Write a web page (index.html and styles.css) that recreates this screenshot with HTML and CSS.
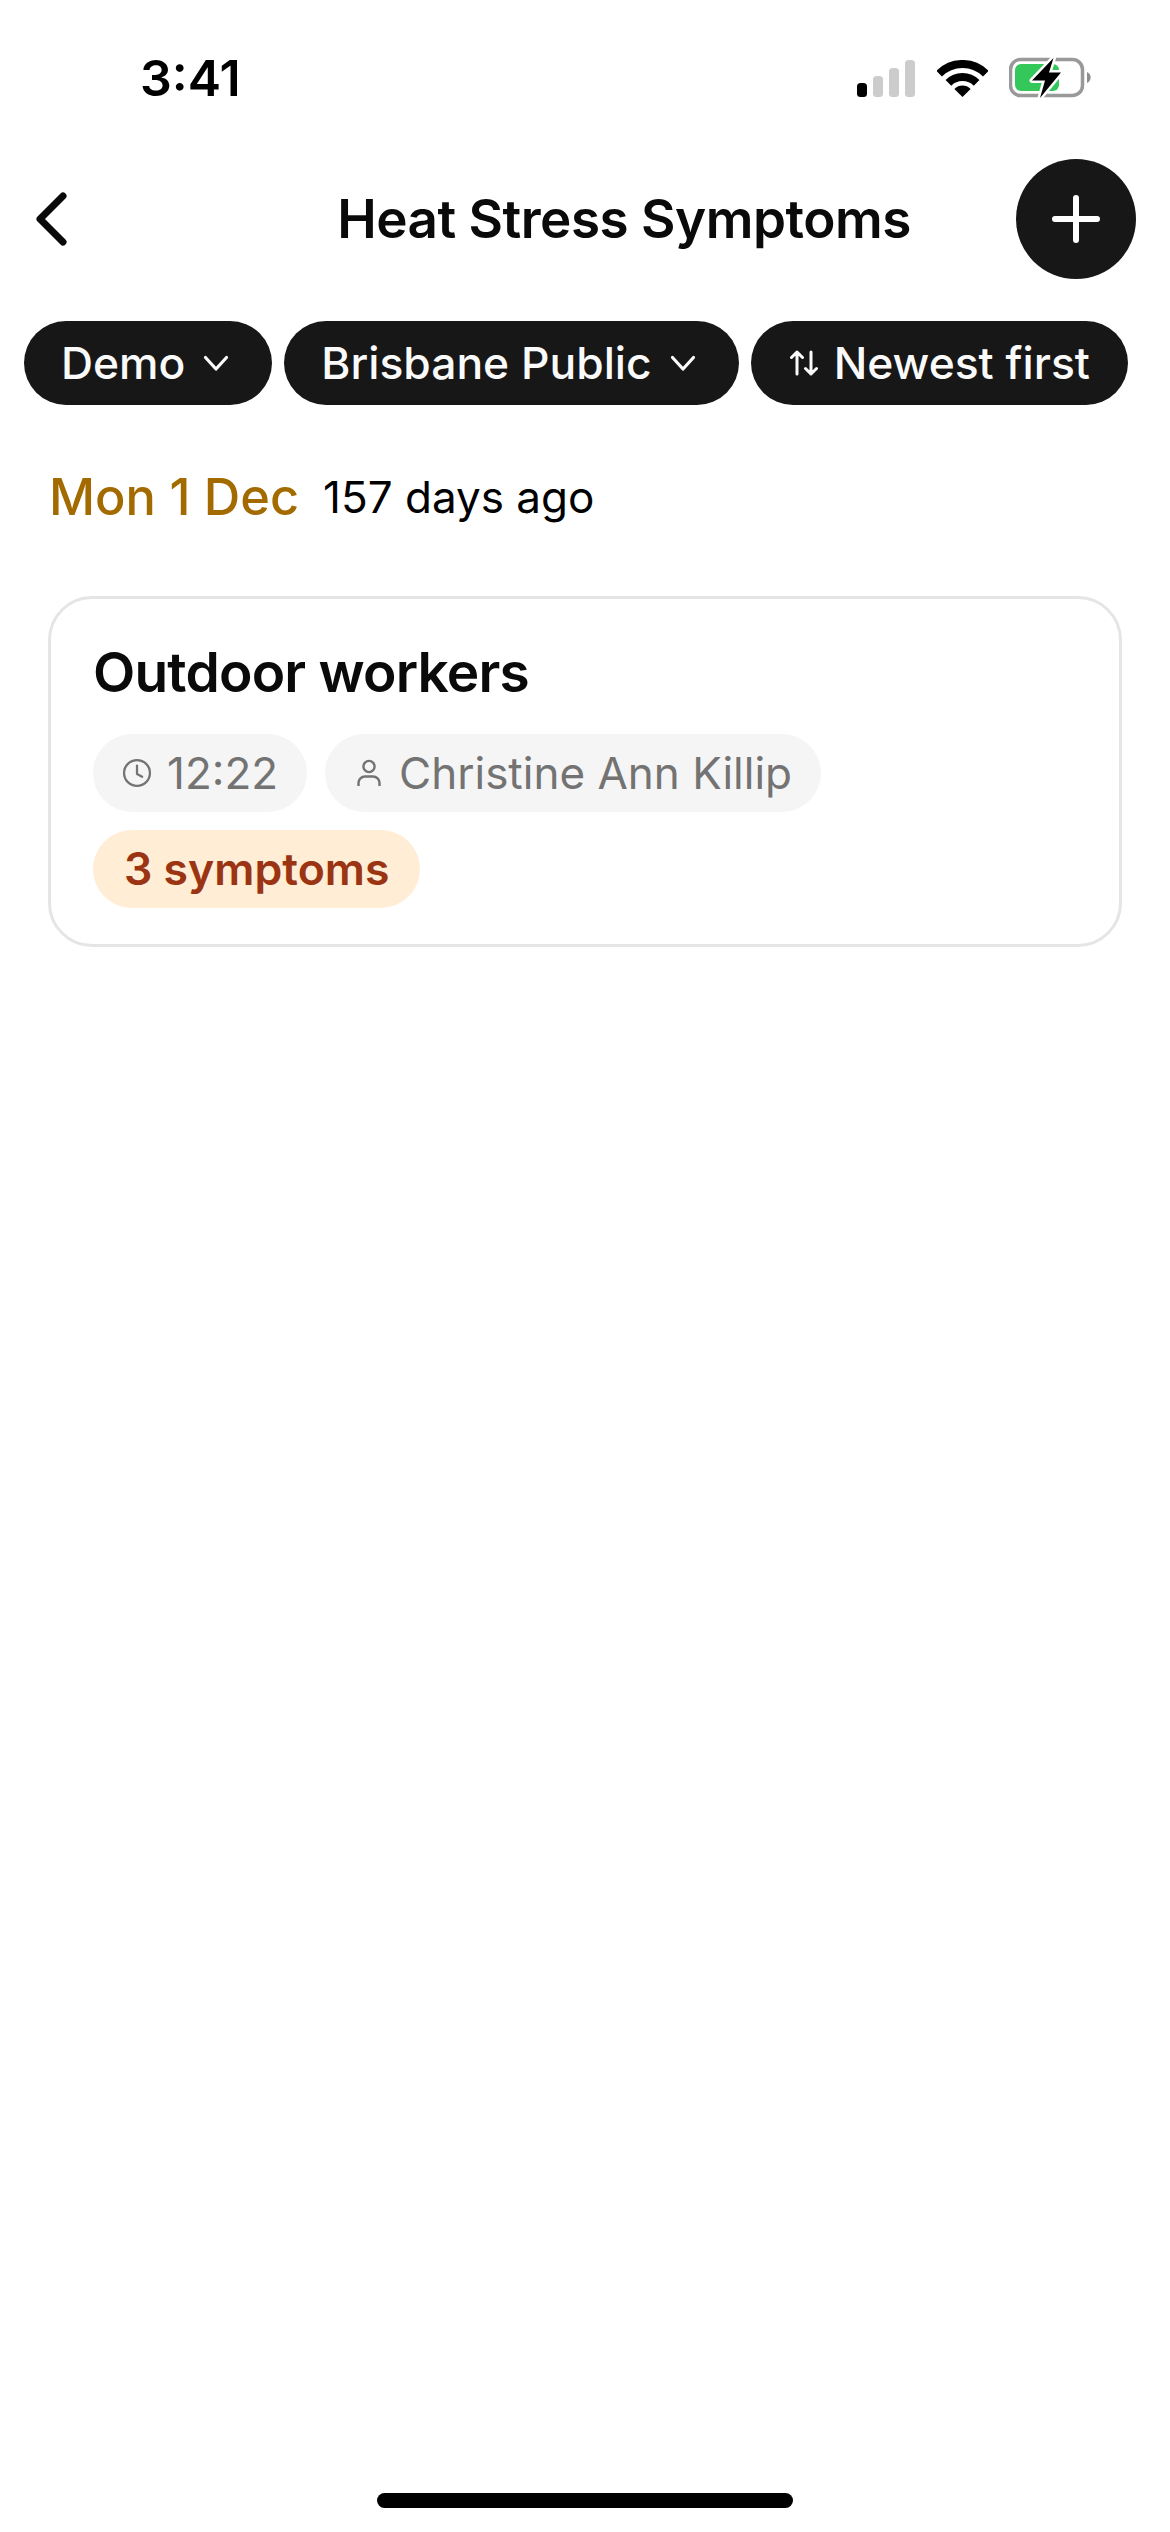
FILE: index.html
```html
<!DOCTYPE html>
<html lang="en">
<head>
    <meta charset="UTF-8">
    <meta name="viewport" content="width=device-width, initial-scale=1.0">
    <title>Heat Stress Symptoms</title>
    <link rel="stylesheet" href="styles.css">
</head>
<body>
    <div class="screen">
        <div class="status-bar">
            <span class="status-time">3:41</span>
            <div class="status-icons">
                <svg class="icon-signal" width="58" height="37" viewBox="0 0 58 37">
                    <rect x="0" y="23" width="10" height="14" rx="3.5" fill="#000"/>
                    <rect x="16" y="16" width="10" height="21" rx="3.5" fill="#ccc"/>
                    <rect x="32" y="8" width="10" height="29" rx="3.5" fill="#ccc"/>
                    <rect x="48" y="0" width="10" height="37" rx="3.5" fill="#ccc"/>
                </svg>
                <svg class="icon-wifi" width="51" height="37" viewBox="0 0 51 37">
                    <path d="M2.1 13.7A33 33 0 0 1 48.9 13.7" fill="none" stroke="#000" stroke-width="8"/>
                    <path d="M11.4 22.9A20 20 0 0 1 39.6 22.9" fill="none" stroke="#000" stroke-width="8"/>
                    <path d="M25.5 37L17.4 28.9A11.5 11.5 0 0 1 33.6 28.9Z" fill="#000"/>
                </svg>
                <svg class="icon-battery" width="82" height="42" viewBox="0 0 82 42">
                    <rect x="1.5" y="2.5" width="72" height="36" rx="10" fill="none" stroke="#999" stroke-width="3.5"/>
                    <rect x="6" y="7" width="44" height="27" rx="6" fill="#34c759"/>
                    <path d="M78 15a6 6 0 0 1 0 11Z" fill="#8e8e8e"/>
                    <path d="M44.5 1L23 23.5H36L31 41L52 15.5H40Z" fill="#000" stroke="#fff" stroke-width="5" stroke-linejoin="round" paint-order="stroke"/>
                </svg>
            </div>
        </div>

        <header class="nav-bar">
            <div class="nav-back">
                <svg width="32" height="54" viewBox="0 0 32 54">
                    <path d="M27 4L4 27L27 50" fill="none" stroke="#0a0a0a" stroke-width="7" stroke-linecap="round" stroke-linejoin="round"/>
                </svg>
            </div>
            <h1 class="nav-title">Heat Stress Symptoms</h1>
            <div class="nav-add">
                <svg width="54" height="54" viewBox="0 0 54 54">
                    <path d="M27 6V48M6 27H48" fill="none" stroke="#fff" stroke-width="6" stroke-linecap="round"/>
                </svg>
            </div>
        </header>

        <div class="filters">
            <div class="filter-pill">
                <span>Demo</span>
                <svg class="chevron" width="36" height="36" viewBox="0 0 36 36">
                    <path d="M7.5 12.5L18 24L28.5 12.5" fill="none" stroke="#fafafa" stroke-width="3.2" stroke-linecap="round" stroke-linejoin="round"/>
                </svg>
            </div>
            <div class="filter-pill">
                <span>Brisbane Public</span>
                <svg class="chevron" width="36" height="36" viewBox="0 0 36 36">
                    <path d="M7.5 12.5L18 24L28.5 12.5" fill="none" stroke="#fafafa" stroke-width="3.2" stroke-linecap="round" stroke-linejoin="round"/>
                </svg>
            </div>
            <div class="filter-pill filter-sort">
                <svg width="28" height="26" viewBox="0 0 28 26">
                    <path d="M7 24V2M1.5 7.5L7 2L12.5 7.5M21 2V24M15.5 18.5L21 24L26.5 18.5" fill="none" stroke="#fafafa" stroke-width="3" stroke-linecap="round" stroke-linejoin="round"/>
                </svg>
                <span>Newest first</span>
            </div>
        </div>

        <div class="date-row">
            <span class="date-label">Mon 1 Dec</span>
            <span class="date-ago">157 days ago</span>
        </div>

        <div class="card">
            <div class="card-title">Outdoor workers</div>
            <div class="chips">
                <div class="chip">
                    <svg width="30" height="30" viewBox="0 0 32 32">
                        <circle cx="16" cy="16" r="13.8" fill="none" stroke="#737373" stroke-width="2.4"/>
                        <path d="M16 8V17L21.5 20" fill="none" stroke="#737373" stroke-width="2.4" stroke-linecap="round" stroke-linejoin="round"/>
                    </svg>
                    <span>12:22</span>
                </div>
                <div class="chip">
                    <svg width="30" height="30" viewBox="0 0 30 30">
                        <circle cx="15" cy="8.5" r="5.6" fill="none" stroke="#737373" stroke-width="2.4"/>
                        <path d="M4.5 28V25A6.5 6.5 0 0 1 11 18.5H19A6.5 6.5 0 0 1 25.5 25V28" fill="none" stroke="#737373" stroke-width="2.4"/>
                    </svg>
                    <span>Christine Ann Killip</span>
                </div>
                <div class="chip chip-symptoms">3 symptoms</div>
            </div>
        </div>

        <div class="home-indicator"></div>
    </div>
</body>
</html>
```

FILE: styles.css
```css
* {
    margin: 0;
    padding: 0;
    box-sizing: border-box;
}

body {
    font-family: 'Inter', 'Liberation Sans', sans-serif;
    background: #fff;
    color: #0a0a0a;
}

.screen {
    display: flex;
    flex-direction: column;
    width: 1170px;
    height: 2532px;
    overflow: hidden;
}

.status-bar {
    display: flex;
    justify-content: space-between;
    align-items: center;
    height: 159px;
    padding: 0 79px 0 140px;
}

.status-time {
    font-size: 50px;
    font-weight: 600;
    color: #000;
    margin-top: -3px;
}

.status-icons {
    display: flex;
    align-items: center;
    margin-top: -3px;
}

.icon-wifi {
    margin-left: 22px;
}

.icon-battery {
    margin-left: 21px;
}

.nav-bar {
    display: flex;
    align-items: center;
    height: 120px;
    padding: 0 34px 0 36px;
}

.nav-back {
    display: flex;
    width: 196px;
}

.nav-title {
    flex: 1;
    text-align: center;
    font-size: 53px;
    font-weight: 600;
    letter-spacing: -0.5px;
}

.nav-add {
    display: flex;
    align-items: center;
    justify-content: center;
    width: 120px;
    height: 120px;
    border-radius: 50%;
    background: #171717;
}

.filters {
    display: flex;
    gap: 12px;
    margin-top: 42px;
    padding: 0 24px;
}

.filter-pill {
    display: flex;
    align-items: center;
    gap: 13px;
    height: 84px;
    padding: 0 38px 0 37px;
    border-radius: 42px;
    background: #171717;
    color: #fafafa;
    font-size: 44.4px;
    font-weight: 500;
}

.filter-sort {
    gap: 16px;
    padding: 0 38px 0 39px;
}

.date-row {
    display: flex;
    align-items: center;
    gap: 24px;
    margin-top: 61px;
    padding: 0 49px;
}

.date-label {
    font-size: 50.5px;
    font-weight: 500;
    color: #a36a00;
}

.date-ago {
    font-size: 44px;
    color: #000;
}

.card {
    margin: 69px 48px 0;
    padding: 41px 42px 36px;
    border: 3px solid #e5e5e5;
    border-radius: 44px;
}

.card-title {
    font-size: 55px;
    font-weight: 600;
    line-height: 64px;
    letter-spacing: -0.8px;
}

.chips {
    display: flex;
    flex-wrap: wrap;
    gap: 18px;
    margin-top: 30px;
}

.chip {
    display: flex;
    align-items: center;
    gap: 15px;
    height: 78px;
    padding: 0 29px;
    border-radius: 39px;
    background: #f5f5f5;
    color: #737373;
    font-size: 44px;
}

.chip-symptoms {
    padding: 0 31px;
    background: #ffedd5;
    color: #9a3412;
    font-size: 44.6px;
    font-weight: 600;
}

.home-indicator {
    width: 416px;
    height: 15px;
    margin: auto auto 24px;
    border-radius: 8px;
    background: #000;
}
```
